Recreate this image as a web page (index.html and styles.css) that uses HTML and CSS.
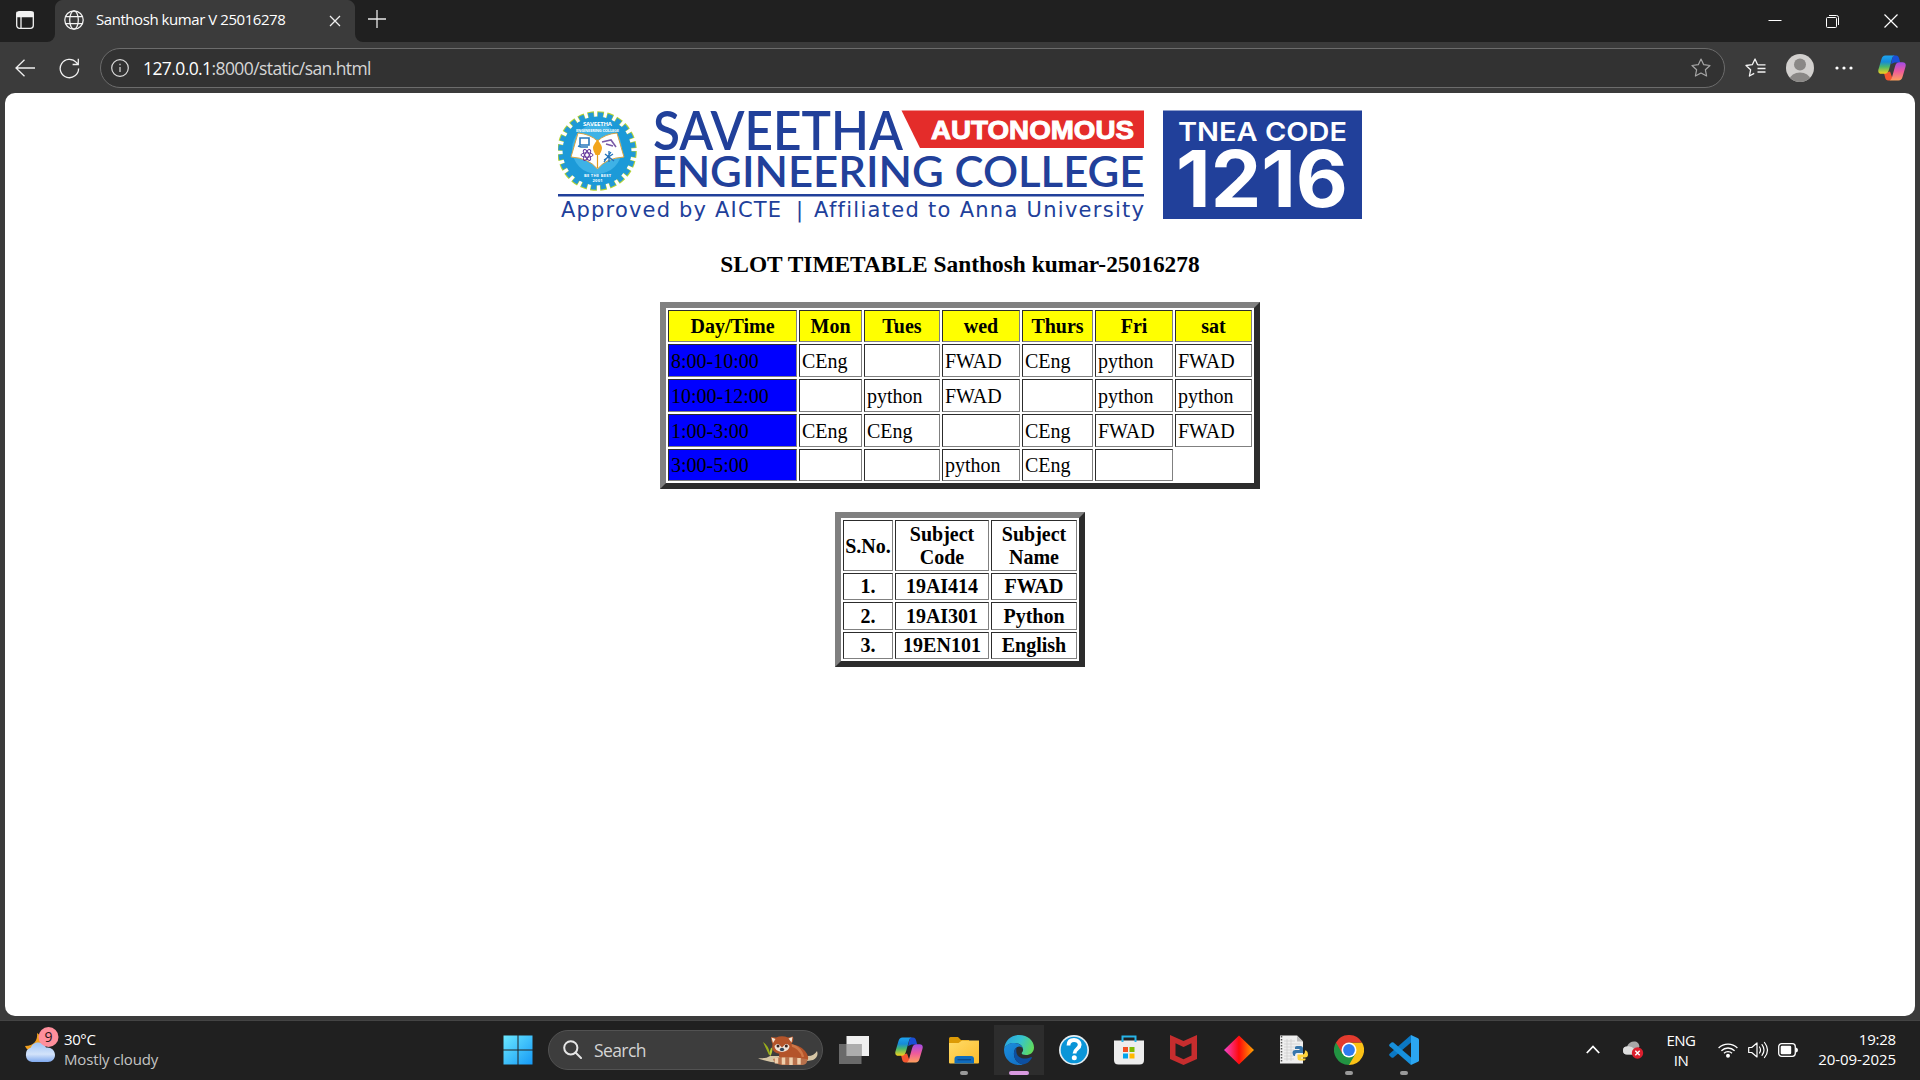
FILE: index.html
```html
<!DOCTYPE html>
<html lang="en">
<head>
<meta charset="utf-8">
<title>Santhosh kumar V 25016278</title>
<link rel="stylesheet" href="styles.css">
</head>
<body>
<svg class="defs" width="0" height="0" aria-hidden="true">
  <defs>
    <linearGradient id="cpA" x1="0" y1="0" x2="0" y2="1"><stop offset="0" stop-color="#1ea4f0"/><stop offset=".35" stop-color="#168bd8"/><stop offset=".62" stop-color="#4bb86a"/><stop offset="1" stop-color="#f6d21c"/></linearGradient>
    <linearGradient id="cpB" x1="0" y1="0" x2="0" y2="1"><stop offset="0" stop-color="#a04be8"/><stop offset=".5" stop-color="#ee5a9c"/><stop offset="1" stop-color="#ffa05c"/></linearGradient>
    <symbol id="copilot" viewBox="0 0 28 26">
      <path d="M15 .5h3c2 0 2.800 1.500 3.200 3.200l1 3.800h-5.500L13 9z" fill="#1a4fd6"/>
      <path d="M6 18l6-1.500L14 22c.5 2-1 3.500-3 3.500C8 25.500 7.500 24 7 22z" fill="#f4562f"/>
      <path d="M7.500.500H17c-1.600 0-2.400 1.200-3 3.200L11 14.500c-.9 3-2 4.300-4.500 4.300H3.500C.6 18.800-.2 17 .5 14.300L3.500 4C4.200 1.700 5.200.500 7.500.500z" fill="url(#cpA)"/>
      <path d="M20.500 25.500H11c1.600 0 2.400-1.200 3-3.200l3-10.800c.9-3 2-4.300 4.500-4.300h3c2.900 0 3.700 1.800 3 4.500L24.500 22c-.7 2.300-1.700 3.500-4 3.500z" fill="url(#cpB)"/>
    </symbol>
  </defs>
</svg>
<div class="screen">
  <header class="tabstrip">
    <div class="tab-actions"><svg width="18" height="18" viewBox="0 0 18 18" fill="none" stroke="#f2f2f2" stroke-width="1.300"><rect x=".7" y=".7" width="16.600" height="16.600" rx="2.800"/><path d="M1 1.500h16v4H1z" fill="#f2f2f2"/><path d="M5 5v12"/></svg></div>
    <div class="tab">
      <svg width="20" height="20" viewBox="0 0 20 20" fill="none" stroke="#f4f4f4" stroke-width="1.250"><circle cx="10" cy="10" r="9.200"/><ellipse cx="10" cy="10" rx="4.300" ry="9.200"/><path d="M1.700 6.500h16.600M1.700 13.500h16.600"/></svg>
      <span class="tab-title">Santhosh kumar V 25016278</span>
      <svg class="tab-close" width="12" height="12" viewBox="0 0 12 12" stroke="#f0f0f0" stroke-width="1.300"><path d="M1 1l10 10M11 1L1 11"/></svg>
    </div>
    <div class="new-tab"><svg width="18" height="18" viewBox="0 0 18 18" stroke="#e8e8e8" stroke-width="1.300"><path d="M9 0v18M0 9h18"/></svg></div>
    <div class="window-buttons">
      <svg width="14" height="14" viewBox="0 0 14 14" stroke="#fff"><path d="M.5 6.500h13"/></svg>
      <svg width="14" height="14" viewBox="0 0 14 14" fill="none" stroke="#fff"><rect x=".5" y="3.500" width="10" height="10" rx="1"/><path d="M3 1.500h7.500q2 0 2 2V11"/></svg>
      <svg width="14" height="14" viewBox="0 0 14 14" stroke="#fff" stroke-width="1.200"><path d="M.5.5l13 13M13.500.5l-13 13"/></svg>
    </div>
  </header>
  <nav class="toolbar">
    <svg class="back" width="20" height="18" viewBox="0 0 20 18" fill="none" stroke="#f0f0f0" stroke-width="1.300"><path d="M9.500.7L1 9l8.500 8.300M1 9h19"/></svg>
    <svg class="reload" width="21" height="21" viewBox="0 0 21 21" fill="none" stroke="#f0f0f0" stroke-width="1.300"><path d="M19.600 10.500a9.200 9.200 0 1 1-2.300-6.100L19 6.300M19.300.8v5.700h-5.700"/></svg>
    <div class="address">
      <svg width="18" height="18" viewBox="0 0 18 18" fill="none" stroke="#dcdcdc" stroke-width="1.200"><circle cx="9" cy="9" r="8.300"/><path d="M9 8v5M9 4.800v1.400"/></svg>
      <span class="url"><b>127.0.0.1</b>:8000/static/san.html</span>
      <svg width="20" height="20" viewBox="0 0 20 20" fill="none" stroke="#a6a6a6" stroke-width="1.200" stroke-linejoin="round"><path d="M10 1l2.700 5.700 6.300.8-4.600 4.300 1.200 6.200L10 15l-5.600 3 1.200-6.200L1 7.500l6.300-.8z"/></svg>
    </div>
    <svg class="favourites" width="21" height="20" viewBox="0 0 21 20" fill="none" stroke="#f4f4f4" stroke-width="1.300" stroke-linejoin="round"><path d="M12.600 6.700L10 1 7.300 6.700l-6.300.8 4.600 4.300L4.400 18l4.800-2.600M12.500 6.900h8M12.500 10.500h8M12.500 14h8"/></svg>
    <svg class="profile" width="28" height="28" viewBox="0 0 28 28"><clipPath id="av"><circle cx="14" cy="14" r="14"/></clipPath><g clip-path="url(#av)"><path d="M0 0h28v28H0z" fill="#d2d0ce"/><circle cx="14" cy="10.500" r="6" fill="#8a8886"/><ellipse cx="14" cy="25" rx="10" ry="6.500" fill="#8a8886"/></g></svg>
    <svg class="more" width="18" height="4" viewBox="0 0 18 4" fill="#fff"><circle cx="2" cy="2" r="1.600"/><circle cx="9" cy="2" r="1.600"/><circle cx="16" cy="2" r="1.600"/></svg>
    <svg class="copilot-button" width="28" height="26"><use href="#copilot"/></svg>
  </nav>

  <main class="page">
    <svg class="banner" width="804" height="116" viewBox="558 108 804 116">
      <circle cx="597" cy="151" r="36.500" fill="none" stroke="#b5d334" stroke-width="6.600" stroke-dasharray="6.400 3.155"/>
      <circle cx="597" cy="151" r="35.500" fill="none" stroke="#2299d6" stroke-width="6.500" stroke-dasharray="5.200 4.094" stroke-dashoffset="-.5"/>
      <circle cx="597" cy="151" r="34.500" fill="#1c9ad8"/>
      <circle cx="597" cy="149" r="25" fill="#3eb2e6"/>
      <path d="M578 133q12 1 19.500 8 7.500-7 19.500-8l7 24q-18 1-26.500 12-9-11-26.500-12z" fill="#fff" stroke="#d9a441" stroke-width="1"/>
      <path d="M597.500 141v27" stroke="#e49a1a" stroke-width="1.200"/>
      <path d="M597.500 139c2 4 4.500 6 4.500 9s-2 5-2.500 7h-4c-.5-2-2.500-4-2.500-7s2.500-5 4.500-9z" fill="#f2a51c"/>
      <path d="M580 138h9v7h-9zM578 146l3 1h7" fill="#fff" stroke="#2878bd" stroke-width="1.600"/>
      <g fill="none" stroke="#64359a"><ellipse cx="587" cy="155" rx="6" ry="2.200"/><ellipse cx="587" cy="155" rx="6" ry="2.200" transform="rotate(60 587 155)"/><ellipse cx="587" cy="155" rx="6" ry="2.200" transform="rotate(120 587 155)"/></g>
      <path d="M602 142l9-2 5 7M606 144l7 2" fill="none" stroke="#7a5aa8" stroke-width="1.600"/>
      <path d="M604 162l7-10M605 154l9 7M609 151v11M613 154l-9 6" stroke="#2272ba" stroke-width="1.300"/>
      <g class="seal"><text x="583" y="126" textLength="29">SAVEETHA</text><text class="seal-small" x="576" y="131.500" textLength="43">ENGINEERING COLLEGE</text><text class="seal-small" x="584" y="176.500" textLength="27">BE THE BEST</text><text class="seal-small" x="592.500" y="181.500" textLength="10">2001</text></g>
      <g fill="#21409a">
        <text class="name" x="653" y="149.500" font-size="53" textLength="250" lengthAdjust="spacingAndGlyphs">SAVEETHA</text>
        <text class="name" x="651.500" y="187" font-size="43" textLength="493" lengthAdjust="spacingAndGlyphs">ENGINEERING COLLEGE</text>
        <path d="M558 194h586v2.400H558z"/>
        <g class="tagline"><text x="561" y="217" textLength="220">Approved by AICTE</text><text x="796" y="217">|</text><text x="814" y="217" textLength="330">Affiliated to Anna University</text></g>
        <path d="M1163 110.500h199v108.500h-199z"/>
      </g>
      <path d="M901.500 110.500H1144v37.500H920z" fill="#e42c2a"/>
      <text class="autonomous" x="931" y="139" textLength="203" lengthAdjust="spacingAndGlyphs">AUTONOMOUS</text>
      <text class="tnea" x="1178" y="140.500" textLength="169" lengthAdjust="spacingAndGlyphs">TNEA CODE</text>
      <text class="code" x="1176" y="207" textLength="172" lengthAdjust="spacingAndGlyphs">1216</text>
    </svg>
    <h3>SLOT TIMETABLE Santhosh kumar-25016278</h3>
    <table class="slots">
      <colgroup><col class="w129"><col class="w63"><col class="w76"><col class="w78"><col class="w71"><col class="w78"><col class="w77"></colgroup>
      <tr class="days"><th>Day/Time</th><th>Mon</th><th>Tues</th><th>wed</th><th>Thurs</th><th>Fri</th><th>sat</th></tr>
      <tr><td>8:00-10:00</td><td>CEng</td><td></td><td>FWAD</td><td>CEng</td><td>python</td><td>FWAD</td></tr>
      <tr><td>10:00-12:00</td><td></td><td>python</td><td>FWAD</td><td></td><td>python</td><td>python</td></tr>
      <tr><td>1:00-3:00</td><td>CEng</td><td>CEng</td><td></td><td>CEng</td><td>FWAD</td><td>FWAD</td></tr>
      <tr class="last"><td>3:00-5:00</td><td></td><td></td><td>python</td><td>CEng</td><td></td></tr>
    </table>
    <table class="subjects">
      <colgroup><col class="w50"><col class="w94"><col class="w86"></colgroup>
      <tr class="head"><th>S.No.</th><th>Subject Code</th><th>Subject Name</th></tr>
      <tr><th>1.</th><th>19AI414</th><th>FWAD</th></tr>
      <tr class="tall"><th>2.</th><th>19AI301</th><th>Python</th></tr>
      <tr><th>3.</th><th>19EN101</th><th>English</th></tr>
    </table>
  </main>

  <footer class="taskbar">
    <div class="weather">
      <svg width="36" height="38" viewBox="0 0 36 38">
        <defs><linearGradient id="cl" x1="0" y1="0" x2="0" y2="1"><stop offset="0" stop-color="#9fc3f5"/><stop offset=".6" stop-color="#d3e3fa"/><stop offset="1" stop-color="#7fa9ee"/></linearGradient></defs>
        <path d="M13 7c1 7-3 13-12 13 2 5 8 7 13 5 6-2 8-8 7-12z" fill="#f2a01e"/>
        <path d="M8 36a7.500 7.500 0 0 1-1-14.500C8 18 11 16.500 14.500 16.500S21 18.500 22 21.500C27 21 31 24 31 29c0 4-3 7-7 7z" fill="url(#cl)"/>
        <circle cx="24.500" cy="11" r="10" fill="#ff8f9c"/>
        <text class="badge" x="24.500" y="16" text-anchor="middle">9</text>
      </svg>
      <div class="weather-text"><span>30°C</span><span class="dim">Mostly cloudy</span></div>
    </div>
    <div class="dock">
      <div class="app"><svg width="30" height="30" viewBox="0 0 30 30"><defs><linearGradient id="win" x1="0" y1="0" x2="1" y2="1"><stop offset="0" stop-color="#6be8ff"/><stop offset="1" stop-color="#1599f6"/></linearGradient></defs><path d="M.500.500h14v14h-14zM15.500.500h14v14h-14zM.500 15.500h14v14h-14zM15.500 15.500h14v14h-14z" fill="url(#win)"/></svg></div>
      <div class="search">
        <svg width="19" height="19" viewBox="0 0 19 19" fill="none" stroke="#e6e6e6" stroke-width="2"><circle cx="7.800" cy="7.800" r="6.600"/><path d="M12.500 12.500l5.500 5.500" stroke-linecap="round"/></svg>
        <span>Search</span>
        <svg width="60" height="32" viewBox="0 0 60 32">
          <path d="M11 21L5 8q6 4 7 12z" fill="#9aae1c"/><path d="M11.500 21q0-6 3-8 0 6-2 9z" fill="#b8cc3a"/>
          <path d="M0 24q8 1 12-2h38q6 0 9-5 2 6-4 9-20 5-42 2Q3 26 0 24z" fill="#d6c6a6"/>
          <path d="M22 12q16-5 25 5 5 6 2 10-20 2-28-4z" fill="#b4542a"/>
          <path d="M33 11q10 3 12 12" fill="none" stroke="#cf7747" stroke-width="2.500"/>
          <path d="M15 25q10-4 34 0 1 5-4 6H24q-8-1-9-6z" fill="#b8714c"/>
          <path d="M18.500 24v5.500M25.500 23.500v7M33 23.500v7.500M41 24v6.500" stroke="#efd0ac" stroke-width="3.500"/>
          <path d="M13 3l5 .500q6-2.500 12 0l5-1q1 5-1.500 7 2 8-4 9.500-5.500 2-11 0-5.500-2.500-4-9-1.500-3-1.500-7z" fill="#b4542a"/>
          <path d="M13.500 3.500l4 1.500-2.500 4zM34.500 3l-4 1.500 3 4z" fill="#f3e6d6"/>
          <path d="M16.500 12q3-3.500 5.500-.5l2 2 2-2q3-3 5.500.5 0 5-7.500 6-7.500-1-7.500-6z" fill="#f0e3d8"/>
          <circle cx="20" cy="12" r="1.500" fill="#3a2520"/><circle cx="28.300" cy="12" r="1.500" fill="#3a2520"/><ellipse cx="24" cy="15.500" rx="2.200" ry="1.800" fill="#34465a"/>
        </svg>
      </div>
      <div class="app"><svg width="30" height="28" viewBox="0 0 30 28"><path d="M7.500 0H30v20H7.500z" fill="#f0f0f0"/><path d="M0 8h22.500v20H0z" fill="#747474" opacity=".88"/><path d="M7.500 8h15v12h-15z" fill="#adadad"/></svg></div>
      <div class="app"><svg width="28" height="26"><use href="#copilot"/></svg></div>
      <div class="app"><svg width="30" height="28" viewBox="0 0 30 28"><defs><linearGradient id="fo" x1="0" y1="0" x2="1" y2="1"><stop offset="0" stop-color="#ffdb68"/><stop offset="1" stop-color="#fbbc2c"/></linearGradient></defs><path d="M0 12V2.500Q0 1 1.500 1H9l3 3h8v8z" fill="#dc9a06"/><path d="M0 7h9.500L13 4.500h17V26.500q0 1-1 1H1q-1 0-1-1z" fill="url(#fo)"/><path d="M5.500 27.500V23q0-3 3-3h13.500q3 0 3 3v4.500z" fill="#0f6cbd"/><path d="M8.500 23.700h13.500" stroke="#0b4a8c" stroke-width="1.400"/></svg><i class="run"></i></div>
      <div class="app active"><svg width="30" height="30" viewBox="0 0 30 30"><defs><linearGradient id="ed" x1="0" y1=".3" x2="1" y2=".6"><stop offset="0" stop-color="#2aa5e0"/><stop offset=".5" stop-color="#35c3cf"/><stop offset="1" stop-color="#62dc58"/></linearGradient><linearGradient id="ed2" x1="0" y1="0" x2=".8" y2="1"><stop offset="0" stop-color="#1c8fdd"/><stop offset="1" stop-color="#1270c5"/></linearGradient></defs><path d="M.2 13.500C1 5.500 7 0 15 0c9 0 15 6 15 12.500 0 5-4 7.500-8 7.500-3.500 0-5-1.200-4-2.500 1-1.300 1.300-2.200 1-3.500C18.500 10.500 15 8 10.500 8 6 8 2 10 .2 13.500z" fill="url(#ed)"/><path d="M.1 13.500C2 9.500 6 7.700 10.500 7.900c4.500.2 8 3 8.500 6.100-.5-1.600-2-2.700-4-2.500-4 .3-5.500 4.500-5 8.500.6 5 4 9 9 9.400-1.300.4-2.600.6-4 .6C6 30-.7 22.500.1 13.500z" fill="url(#ed2)"/><path d="M13 12c-1 1.500-1.500 7 2 9.700 3.500 2.600 8 2.300 11.700.5 1-.5 1.500.2 1 1C25.500 27 22.500 29 19 29.400c-5-.4-8.400-4.400-9-9.400-.4-3.500.7-6.500 3-8z" fill="#0d4fa0"/></svg><i class="run wide"></i></div>
      <div class="app"><svg width="30" height="30" viewBox="0 0 30 30"><circle cx="15" cy="15" r="15" fill="#e6edf1"/><circle cx="15" cy="15" r="13.300" fill="#0a95d8"/><path d="M9.500 10.500C9.500 6.500 12 5 15 5s5.700 1.800 5.700 4.800c0 4.200-5.200 4-5.200 8.700" fill="none" stroke="#fff" stroke-width="3.800"/><circle cx="15.300" cy="22.800" r="2.500" fill="#fff"/></svg></div>
      <div class="app"><svg width="30" height="30" viewBox="0 0 30 30"><path d="M0 5.500h30V25q0 4.500-4.500 4.500h-21Q0 29.500 0 25z" fill="#ededed"/><path d="M8.500 7V1.500h13V7" fill="none" stroke="#27b4e8" stroke-width="2"/><path d="M9 12h5v5H9z" fill="#f25022"/><path d="M15.500 12h5v5h-5z" fill="#7fba00"/><path d="M9 18.500h5v5H9z" fill="#00a4ef"/><path d="M15.500 18.500h5v5h-5z" fill="#ffb900"/></svg></div>
      <div class="app"><svg width="27" height="30" viewBox="0 0 27 30"><path fill-rule="evenodd" d="M0 0l13.500 6L27 0v24l-13.500 6L0 24zM5.500 8.300v12.300l8 3.700 8-3.700V8.300l-8 3.700z" fill="#c62d2e"/></svg></div>
      <div class="app"><svg width="30" height="30" viewBox="0 0 30 30"><defs><linearGradient id="di"><stop offset="0" stop-color="#f344d0"/><stop offset=".5" stop-color="#ff0a0a"/><stop offset="1" stop-color="#ffa500"/></linearGradient></defs><path d="M15 .5L30 15 15 29.500 0 15z" fill="url(#di)"/></svg></div>
      <div class="app"><svg width="28" height="30" viewBox="0 0 28 30"><path d="M0 .5h17l6 6V28.500H0z" fill="#efefef"/><path d="M17 .5l6 6h-6z" fill="#bdbdbd"/><path d="M1.500 1v27" stroke="#555" stroke-dasharray="1.500 1.500" stroke-width="1.500"/><path d="M4 6h11M4 9h16M4 12h16M4 15h10M4 18h9M4 21h9M4 24h10M7 4v22M11 4v22" stroke="#cfcfcf" stroke-width=".8"/><path d="M17 11h3.500q2.500 0 2.500 2.500V18h-6q-2 0-2 3h-1q-1.500-1-1.500-3.500 0-2.500 3-2.500h4v-1h-4.500q-.5-3 2-3z" fill="#3776ab"/><path d="M23.500 25.500H20q-2.500 0-2.500-2.500v-3.500h5q2.500 0 2.500-4h1q2 1 2 4 0 3-3 3h-4v1h4.500q.5 2-2 2z" fill="#ffd43b"/></svg></div>
      <div class="app"><svg width="30" height="30" viewBox="0 0 30 30"><path d="M15 15V7.500h13A15 15 0 0 1 15 30z" fill="#fbc116"/><path d="M15 15l6.500 3.700L15 30A15 15 0 0 1 2 7.500z" fill="#229342"/><path d="M15 7.500H28A15 15 0 0 0 2 7.500l6.500 11.200z" fill="#e33b2e"/><circle cx="15" cy="15" r="7.500" fill="#fff"/><circle cx="15" cy="15" r="5.900" fill="#2f7bf0"/></svg><i class="run"></i></div>
      <div class="app"><svg width="30" height="30" viewBox="0 0 30 30"><path d="M22 0v7.500L4.500 22.500q-1 .7-2 0L.6 20.800q-.9-1 0-2z" fill="#0b78c4"/><path d="M22 30v-7.500L4.500 7.500q-1-.7-2 0L.6 9.200q-.9 1 0 2z" fill="#1790dc"/><path d="M22 0l7 3.300q1 .5 1 1.500v20.400q0 1-1 1.500L22 30z" fill="#2ba6f2"/></svg><i class="run"></i></div>
    </div>
    <div class="tray">
      <svg class="chevron" width="14" height="9" viewBox="0 0 14 9" fill="none" stroke="#fff" stroke-width="1.800"><path d="M.8 8L7 1.500 13.200 8"/></svg>
      <svg class="cloud" width="21" height="18" viewBox="0 0 21 18"><path d="M4 13.500a4 4 0 0 1 0-8C5.500 2 8 .5 11 .5c3.500 0 5 2 5.500 5l-6 8z" fill="#a8a8a8"/><path d="M4 13.500a4 4 0 0 1 0-8q4-1 8 3v5z" fill="#dedede"/><circle cx="14.500" cy="12" r="5.700" fill="#dc1f2e"/><path d="M12.300 9.800l4.400 4.400M16.700 9.800l-4.400 4.400" stroke="#fff" stroke-width="1.400"/></svg>
      <div class="lang"><span>ENG</span><span>IN</span></div>
      <svg class="wifi" width="20" height="16" viewBox="0 0 20 16" fill="none" stroke="#fff" stroke-width="1.300"><path d="M.6 6a13.300 13.300 0 0 1 18.800 0M3.400 8.700a9.400 9.400 0 0 1 13.200 0M6 11.300a5.600 5.600 0 0 1 8 0"/><circle cx="10" cy="13.700" r="1.300" fill="#fff"/></svg>
      <svg class="sound" width="21" height="18" viewBox="0 0 21 18" fill="none" stroke="#fff" stroke-width="1.200" stroke-linejoin="round"><path d="M.7 6.500h3L9 2v14l-5.300-4.500h-3z"/><path d="M11.500 6q2 3 0 6M14 3.700q4 5.300 0 10.600M16.500 1.500q6 7.500 0 15" stroke-linecap="round"/></svg>
      <svg class="battery" width="20" height="14" viewBox="0 0 20 14"><rect x=".7" y=".7" width="16.600" height="12.600" rx="3" fill="none" stroke="#fff" stroke-width="1.300"/><rect x="2.700" y="2.700" width="10.500" height="8.600" rx="1.300" fill="#fff"/><path d="M18 4.500q2 .5 2 2.500t-2 2.500z" fill="#fff"/></svg>
      <div class="clock"><span>19:28</span><span class="date">20-09-2025</span></div>
    </div>
  </footer>
</div>
</body>
</html>
```
FILE: styles.css
```css
* { box-sizing: border-box; }
body { margin: 0; background: #3b3b3b; }
.defs { position: absolute; }
svg { display: block; flex: none; }
.screen {
  width: 1920px; height: 1080px; overflow: hidden;
  display: flex; flex-direction: column;
  background: #3b3b3b;
  font-family: "Open Sans", "Noto Sans", sans-serif;
  font-size: 15px; color: #fff;
}

/* tab strip */
.tabstrip { height: 42px; flex: none; display: flex; background: #3b3b3b; }
.tab-actions { width: 55px; padding: 11px 0 0 16px; background: #202020; border-radius: 0 0 8px 0; }
.tab {
  width: 300px; padding: 0 14px 2px 9px;
  display: flex; align-items: center;
  background:
    radial-gradient(circle at 8px 8px, #3b3b3b 7.500px, #202020 8.500px) 0 0 / 8px 8px no-repeat,
    radial-gradient(circle at 0 8px, #3b3b3b 7.500px, #202020 8.500px) 100% 0 / 8px 8px no-repeat;
}
.tab-title { margin-left: 12px; padding-bottom: 2px; letter-spacing: -.44px; white-space: nowrap; }
.tab-close { margin: 2px 0 0 auto; }
.new-tab { width: 58px; padding: 10px 0 0 13px; background: #202020; border-radius: 0 0 0 8px; }
.window-buttons {
  flex: 1; display: flex; justify-content: flex-end; gap: 44px;
  padding: 14px 22px 0 0; background: #202020;
}

/* toolbar */
.toolbar { height: 51px; flex: none; display: flex; align-items: center; padding: 1px 12px 0 15px; }
.reload { margin-left: 24px; }
.address {
  width: 1625px; height: 40px; margin-left: 20px; padding: 0 13px 0 10px;
  display: flex; align-items: center;
  background: #323232; border: 1px solid #6c6c6c; border-radius: 20px;
}
.address > :last-child { margin-left: auto; }
.url { margin-left: 14px; padding-bottom: 1px; font-size: 17.500px; letter-spacing: -.59px; color: #d6d6d6; white-space: nowrap; }
.url b { font-weight: 400; color: #fff; }
.favourites { margin-left: 20px; }
.profile { margin-left: 20px; }
.more { margin-left: 21px; }
.copilot-button { margin-left: 25px; }

/* page */
.page {
  height: 923px; flex: none; margin: 0 5px; padding-top: 15px;
  display: flex; flex-direction: column; align-items: center;
  background: #fff; border-radius: 10px; color: #000;
  font: 20px/23px "Liberation Serif", "Times New Roman", serif;
}
.name { font-family: Lato, sans-serif; font-weight: 600; }
.tagline { font: 21px "DejaVu Sans", sans-serif; font-variant-ligatures: none; }
.autonomous { font: 700 26.500px "Liberation Sans", Arial, sans-serif; fill: #fff; stroke: #fff; stroke-width: 1px; }
.tnea { font: 600 26px Inter, sans-serif; fill: #fff; }
.code { font: 700 78px Inter, sans-serif; fill: #fff; }
.seal { font: 700 6px "Open Sans", sans-serif; fill: #fff; }
.seal-small { font-size: 4px; }
h3 { margin: 27px 0 24px; font-size: 23.400px; line-height: 27px; }
table {
  table-layout: fixed; border-spacing: 2px;
  border: 6px solid; border-color: #808080 #2c2c2c #2c2c2c #808080;
}
th, td {
  padding: 0 1px; height: 33px;
  border: 1px solid; border-color: #2c2c2c #808080 #808080 #2c2c2c;
}
td { padding: 1px 0 0 2px; }
.slots { width: 600px; height: 187px; }
.days th { height: 32px; padding-top: 1px; background: #ff0; }
.last td { height: 32px; padding-top: 0; }
.slots td:first-child { background: #00f; }
.subjects { width: 250px; height: 155px; margin-top: 23px; }
.subjects th { height: 27px; }
.subjects .head th { height: 51px; padding-top: 1px; }
.subjects .tall th { height: 28px; padding-top: 1px; }
.w129 { width: 129px; } .w63 { width: 63px; } .w76 { width: 76px; } .w78 { width: 78px; }
.w71 { width: 71px; } .w77 { width: 77px; }
.w50 { width: 50px; } .w94 { width: 94px; } .w86 { width: 86px; }

/* taskbar */
.taskbar {
  height: 60px; margin-top: 4px; flex: none; display: flex;
  background: #202020; border-top: 1px solid #444;
  line-height: 20px;
}
.weather { width: 490px; display: flex; padding: 5px 0 0 24px; }
.weather-text { display: flex; flex-direction: column; margin-left: 4px; padding-top: 3px; letter-spacing: -.4px; }
.dim { color: #c4c4c4; letter-spacing: -.15px; }
.badge { font-size: 14px; fill: #2a1416; }
.dock { width: 943px; display: flex; align-items: center; padding-bottom: 2px; }
.app { position: relative; width: 55px; height: 50px; display: flex; align-items: center; justify-content: center; }
.active { background: linear-gradient(#2d2d2d, #2d2d2d) center / 50px 50px no-repeat; }
.run { position: absolute; bottom: 0; width: 8px; height: 4px; border-radius: 2px; background: #9a9a9a; }
.run.wide { width: 20px; background: #d99ae0; }
.search {
  width: 275px; height: 40px; margin: 0 3px; padding: 0 4px 0 14px;
  display: flex; align-items: center;
  background: #3d3d3d; border: 1px solid #525252; border-radius: 20px;
}
.search span { margin-left: 12px; font-size: 17.500px; letter-spacing: -.6px; color: #d4d4d4; }
.search > :last-child { margin-left: auto; }
.tray { flex: 1; display: flex; align-items: center; padding: 0 24px 2px 153px; letter-spacing: -.5px; }
.cloud { margin-left: 23px; }
.lang { display: flex; flex-direction: column; align-items: center; width: 36px; margin-left: 19px; }
.wifi { margin-left: 19px; }
.sound { margin-left: 10px; }
.battery { margin-left: 9px; }
.clock { margin-left: auto; display: flex; flex-direction: column; align-items: flex-end; padding-bottom: 1px; letter-spacing: -.2px; }
.date { letter-spacing: -.05px; }
```
